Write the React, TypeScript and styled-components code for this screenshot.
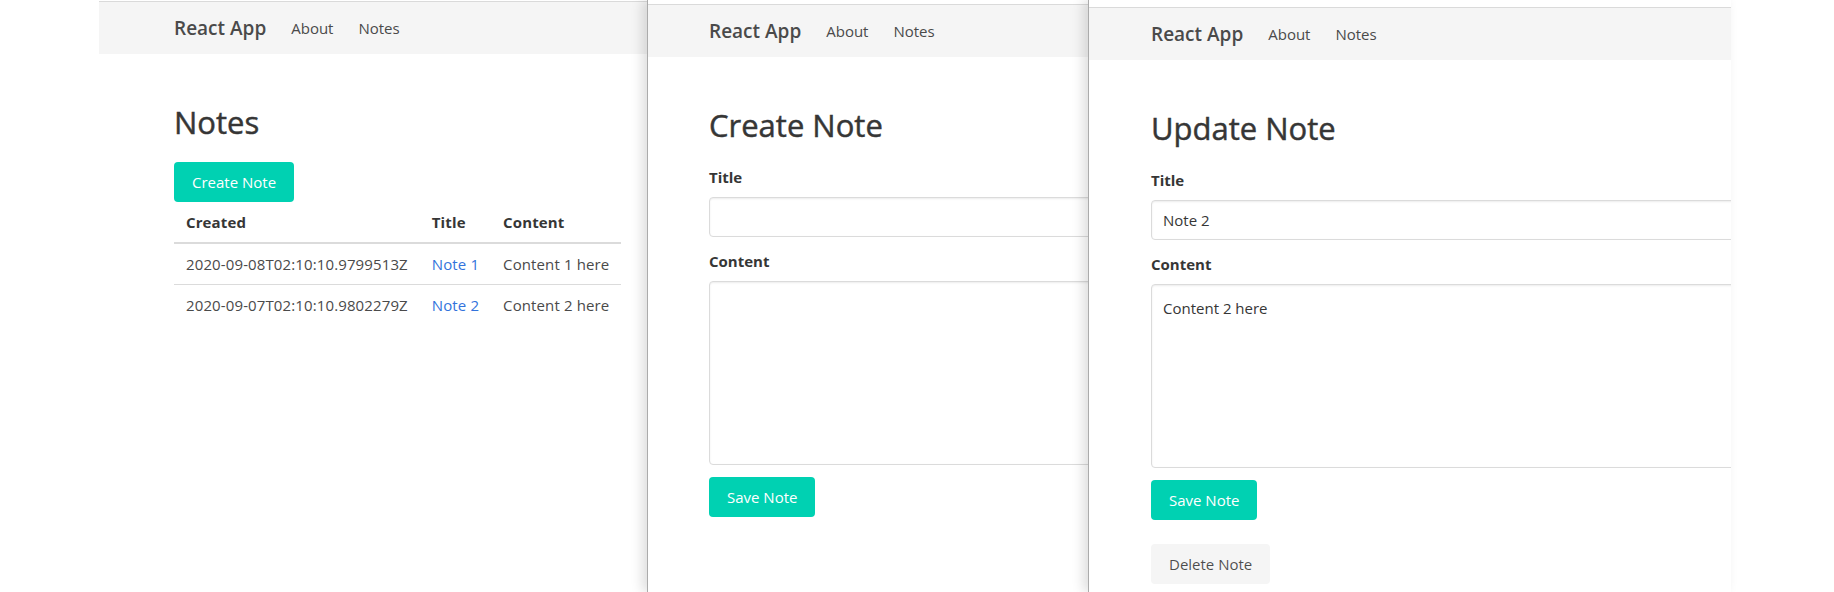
import styled, { createGlobalStyle, css } from 'styled-components';

const GlobalStyle = createGlobalStyle`
  html, body {
    margin: 0;
    padding: 0;
    background: #fff;
  }
  body {
    font-family: 'Open Sans', 'Noto Sans', sans-serif;
    font-size: 15px;
    line-height: 24px;
    color: #4a4a4a;
  }
  * {
    box-sizing: border-box;
  }
`;

const Desktop = styled.div`
  position: relative;
  width: 1834px;
  height: 592px;
  overflow: hidden;
  background: #fff;
`;

// browser windows stacked on the screenshot, each one at its own spot
const Window = styled.div<{ $left: number; $width: number; $z: number; $edge?: boolean }>`
  position: absolute;
  top: 0;
  left: ${p => p.$left}px;
  width: ${p => p.$width}px;
  height: 592px;
  z-index: ${p => p.$z};
  background: #fff;
  overflow: hidden;
  display: flex;
  flex-direction: column;

  ${p =>
    p.$edge &&
    css`
      border-left: 1px solid #ababab;
      box-shadow: -5px 0 11px rgba(0, 0, 0, 0.13);
    `}
`;

const Chrome = styled.div<{ $h: number }>`
  flex: none;
  height: ${p => p.$h + 1}px;
  border-bottom: 1px solid #dadada;
  background: #fff;
`;

const Navbar = styled.nav<{ $inset: number }>`
  flex: none;
  height: 52px;
  background: #f5f5f5;
  display: flex;
  align-items: center;
  gap: 25px;
  padding-left: ${p => p.$inset}px;
`;

const Brand = styled.span`
  font-size: 19px;
  font-weight: 600;
  color: #4a4a4a;
  white-space: nowrap;
`;

const NavLink = styled.a`
  font-size: 15px;
  color: #4a4a4a;
  text-decoration: none;
  white-space: nowrap;
`;

const Section = styled.section<{ $inset: number }>`
  padding: 50px 0 0 ${p => p.$inset}px;
  width: 1000px;
`;

const Title = styled.h1`
  margin: 0 0 22px;
  font-size: 31px;
  line-height: 36px;
  font-weight: 400;
  color: #363636;
  -webkit-text-stroke: 0.45px #363636;
  white-space: nowrap;
`;

const Button = styled.button<{ $variant?: 'primary' | 'light' }>`
  display: inline-flex;
  align-items: center;
  height: 40px;
  padding: 0 17px;
  border: 1px solid transparent;
  border-radius: 4px;
  font-family: inherit;
  font-size: 15px;
  line-height: 24px;
  white-space: nowrap;
  cursor: pointer;
  background: ${p => (p.$variant === 'light' ? '#f5f5f5' : '#00d1b2')};
  color: ${p => (p.$variant === 'light' ? 'rgba(0, 0, 0, 0.7)' : '#fff')};
`;

const Table = styled.table`
  border-collapse: collapse;
  border-spacing: 0;
  letter-spacing: 0.12px;
`;

const Th = styled.th`
  padding: 8px 12px;
  text-align: left;
  font-weight: 700;
  color: #363636;
  border-bottom: 2px solid #dbdbdb;
  white-space: nowrap;
`;

const Tr = styled.tr`
  &:last-child td {
    border-bottom: none;
  }
`;

const Td = styled.td`
  padding: 8px 12px;
  border-bottom: 1px solid #dbdbdb;
  white-space: nowrap;
`;

const NoteLink = styled.a`
  color: #3273dc;
  text-decoration: none;
`;

const Field = styled.div`
  margin-bottom: 12px;
`;

const Label = styled.label`
  display: block;
  margin-bottom: 8px;
  font-weight: 700;
  color: #363636;
`;

const fieldBox = css`
  display: block;
  width: 100%;
  border: 1px solid #dbdbdb;
  border-radius: 4px;
  box-shadow: inset 0 1px 2px rgba(10, 10, 10, 0.08);
  font-family: inherit;
  font-size: 15px;
  line-height: 24px;
  color: #363636;
  background: #fff;
  outline: none;
`;

const Input = styled.input`
  ${fieldBox}
  height: 40px;
  padding: 0 11px;
`;

const TextArea = styled.textarea`
  ${fieldBox}
  height: 184px;
  padding: 11px;
  resize: none;
`;

const DeleteRow = styled.div`
  margin-top: 24px;
`;

type Note = {
  id: number;
  created: string;
  title: string;
  content: string;
};

const notes: Note[] = [
  { id: 1, created: '2020-09-08T02:10:10.9799513Z', title: 'Note 1', content: 'Content 1 here' },
  { id: 2, created: '2020-09-07T02:10:10.9802279Z', title: 'Note 2', content: 'Content 2 here' },
];

const Nav = ({ inset }: { inset: number }) => (
  <Navbar $inset={inset}>
    <Brand>React App</Brand>
    <NavLink>About</NavLink>
    <NavLink>Notes</NavLink>
  </Navbar>
);

const NoteForm = ({ heading, note }: { heading: string; note?: Note }) => (
  <>
    <Title>{heading}</Title>
    <Field>
      <Label>Title</Label>
      <Input defaultValue={note?.title ?? ''} />
    </Field>
    <Field>
      <Label>Content</Label>
      <TextArea defaultValue={note?.content ?? ''} />
    </Field>
    <Button $variant="primary">Save Note</Button>
    {note && (
      <DeleteRow>
        <Button $variant="light">Delete Note</Button>
      </DeleteRow>
    )}
  </>
);

export default function App() {
  return (
    <Desktop>
      <GlobalStyle />

      <Window $left={99} $width={600} $z={1}>
        <Chrome $h={1} />
        <Nav inset={75} />
        <Section $inset={75}>
          <Title>Notes</Title>
          <Button $variant="primary">Create Note</Button>
          <Table>
            <thead>
              <tr>
                <Th>Created</Th>
                <Th>Title</Th>
                <Th>Content</Th>
              </tr>
            </thead>
            <tbody>
              {notes.map(note => (
                <Tr key={note.id}>
                  <Td>{note.created}</Td>
                  <Td>
                    <NoteLink>{note.title}</NoteLink>
                  </Td>
                  <Td>{note.content}</Td>
                </Tr>
              ))}
            </tbody>
          </Table>
        </Section>
      </Window>

      <Window $left={647} $width={520} $z={2} $edge>
        <Chrome $h={4} />
        <Nav inset={61} />
        <Section $inset={61}>
          <NoteForm heading="Create Note" />
        </Section>
      </Window>

      <Window $left={1088} $width={643} $z={3} $edge>
        <Chrome $h={7} />
        <Nav inset={62} />
        <Section $inset={62}>
          <NoteForm heading="Update Note" note={notes[1]} />
        </Section>
      </Window>
    </Desktop>
  );
}
